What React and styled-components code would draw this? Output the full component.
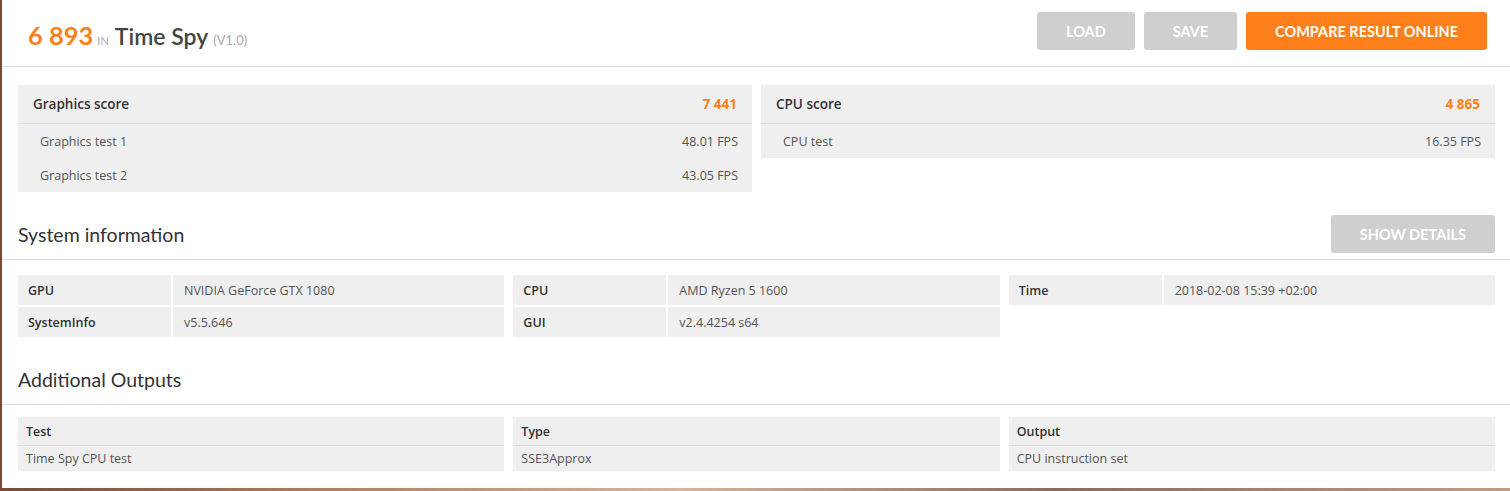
import React from 'react'
import styled, { createGlobalStyle } from 'styled-components'

const GlobalStyle = createGlobalStyle`
  html, body {
    margin: 0;
    padding: 0;
  }
  body {
    font-family: "Open Sans", "Liberation Sans", sans-serif;
    background: linear-gradient(90deg, #7a4a36 0%, #b07a5a 20%, #d9b39a 45%, #8d6a5c 70%, #c59a84 100%);
    height: 491px;
    overflow: hidden;
  }
`

const orange = '#ff7f1a'

const Window = styled.div`
  margin-left: 2px;
  height: 488px;
  background: #fff;
`

const TopBar = styled.header`
  display: flex;
  align-items: flex-start;
  justify-content: space-between;
  height: 67px;
  padding: 0 23px 0 26px;
  border-bottom: 1px solid #ddd;
  box-sizing: border-box;
`

const Title = styled.h1`
  margin: 0;
  display: flex;
  align-items: baseline;
  font-family: Lato, "Open Sans", sans-serif;
  font-weight: normal;
  padding-top: 20px;

  .score {
    color: ${orange};
    font-size: 25.5px;
    font-weight: bold;
  }
  .in {
    color: #aaa;
    font-size: 11px;
    margin: 0 6px 0 4px;
  }
  .name {
    color: #444;
    font-size: 23px;
    font-weight: 600;
  }
  .ver {
    color: #aaa;
    font-size: 13px;
    margin-left: 5px;
  }
`

const Actions = styled.div`
  display: flex;
  gap: 9px;
  margin-top: 12px;
`

const Button = styled.button`
  height: 38px;
  border: 0;
  border-radius: 3px;
  padding: 0 29px;
  background: ${(p) => (p.$primary ? orange : '#cfcfcf')};
  color: #fff;
  font-family: Lato, "Open Sans", sans-serif;
  font-weight: bold;
  font-size: 14.5px;
  cursor: pointer;
`

const ScoreGrid = styled.div`
  display: grid;
  grid-template-columns: 1fr 1fr;
  gap: 9px;
  align-items: start;
  padding: 18px 15px 0 16px;
`

const ScorePanel = styled.div`
  background: #efefef;
`

const ScoreHead = styled.div`
  display: flex;
  justify-content: space-between;
  align-items: center;
  height: 38px;
  padding: 0 15px;
  border-bottom: 1px solid #dcdcdc;
  font-size: 13.5px;
  font-weight: 600;
  color: #333;

  span:last-child {
    color: ${orange};
    font-weight: bold;
  }
`

const ScoreRow = styled.div`
  display: flex;
  justify-content: space-between;
  align-items: center;
  height: 34px;
  padding: 0 14px 0 22px;
  font-size: 12.5px;
  color: #555;
`

const SectionHead = styled.div`
  display: flex;
  justify-content: space-between;
  align-items: center;
  min-height: 38px;
  margin-top: 23px;
  padding: 0 15px 6px 16px;
  border-bottom: 1px solid #ddd;

  h2 {
    margin: 0;
    font-family: Lato, "Open Sans", sans-serif;
    font-weight: normal;
    font-size: 19.5px;
    color: #333;
  }
`

const InfoGrid = styled.div`
  display: grid;
  grid-template-columns: repeat(3, 1fr);
  gap: 9px;
  align-items: start;
  padding: 15px 15px 0 16px;
`

const InfoGroup = styled.div`
  display: grid;
  grid-template-columns: 153px 1fr;
  gap: 2px;
`

const Cell = styled.div`
  background: #efefef;
  height: 30px;
  display: flex;
  align-items: center;
  padding-left: ${(p) => (p.$label ? 10 : 11)}px;
  font-size: 12.5px;
  color: ${(p) => (p.$label ? '#333' : '#555')};
  font-weight: ${(p) => (p.$label ? 600 : 'normal')};
`

const OutputGrid = styled.div`
  display: grid;
  grid-template-columns: repeat(3, 1fr);
  gap: 9px;
  padding: 12px 15px 0 16px;
`

const OutputCol = styled.div`
  background: #efefef;
`

const OutputHead = styled.div`
  height: 28px;
  display: flex;
  align-items: center;
  padding-left: 8px;
  border-bottom: 1px solid #dcdcdc;
  font-size: 12.5px;
  font-weight: 600;
  color: #333;
`

const OutputValue = styled.div`
  height: 25px;
  display: flex;
  align-items: center;
  padding-left: 8px;
  font-size: 12.5px;
  color: #555;
`

const scores = [
  { title: 'Graphics score', value: '7 441', rows: [['Graphics test 1', '48.01 FPS'], ['Graphics test 2', '43.05 FPS']] },
  { title: 'CPU score', value: '4 865', rows: [['CPU test', '16.35 FPS']] },
]

const info = [
  [['GPU', 'NVIDIA GeForce GTX 1080'], ['SystemInfo', 'v5.5.646']],
  [['CPU', 'AMD Ryzen 5 1600'], ['GUI', 'v2.4.4254 s64']],
  [['Time', '2018-02-08 15:39 +02:00']],
]

const outputs = [
  ['Test', 'Time Spy CPU test'],
  ['Type', 'SSE3Approx'],
  ['Output', 'CPU instruction set'],
]

export default function App() {
  return (
    <>
      <GlobalStyle />
      <Window>
        <TopBar>
          <Title>
            <span className="score">6 893</span>
            <span className="in">IN</span>
            <span className="name">Time Spy</span>
            <span className="ver">(V1.0)</span>
          </Title>
          <Actions>
            <Button>LOAD</Button>
            <Button>SAVE</Button>
            <Button $primary>COMPARE RESULT ONLINE</Button>
          </Actions>
        </TopBar>

        <ScoreGrid>
          {scores.map((s) => (
            <ScorePanel key={s.title}>
              <ScoreHead>
                <span>{s.title}</span>
                <span>{s.value}</span>
              </ScoreHead>
              {s.rows.map(([name, fps]) => (
                <ScoreRow key={name}>
                  <span>{name}</span>
                  <span>{fps}</span>
                </ScoreRow>
              ))}
            </ScorePanel>
          ))}
        </ScoreGrid>

        <SectionHead>
          <h2>System information</h2>
          <Button>SHOW DETAILS</Button>
        </SectionHead>

        <InfoGrid>
          {info.map((group, i) => (
            <InfoGroup key={i}>
              {group.map(([label, value]) => (
                <React.Fragment key={label}>
                  <Cell $label>{label}</Cell>
                  <Cell>{value}</Cell>
                </React.Fragment>
              ))}
            </InfoGroup>
          ))}
        </InfoGrid>

        <SectionHead>
          <h2>Additional Outputs</h2>
        </SectionHead>

        <OutputGrid>
          {outputs.map(([head, value]) => (
            <OutputCol key={head}>
              <OutputHead>{head}</OutputHead>
              <OutputValue>{value}</OutputValue>
            </OutputCol>
          ))}
        </OutputGrid>
      </Window>
    </>
  )
}
